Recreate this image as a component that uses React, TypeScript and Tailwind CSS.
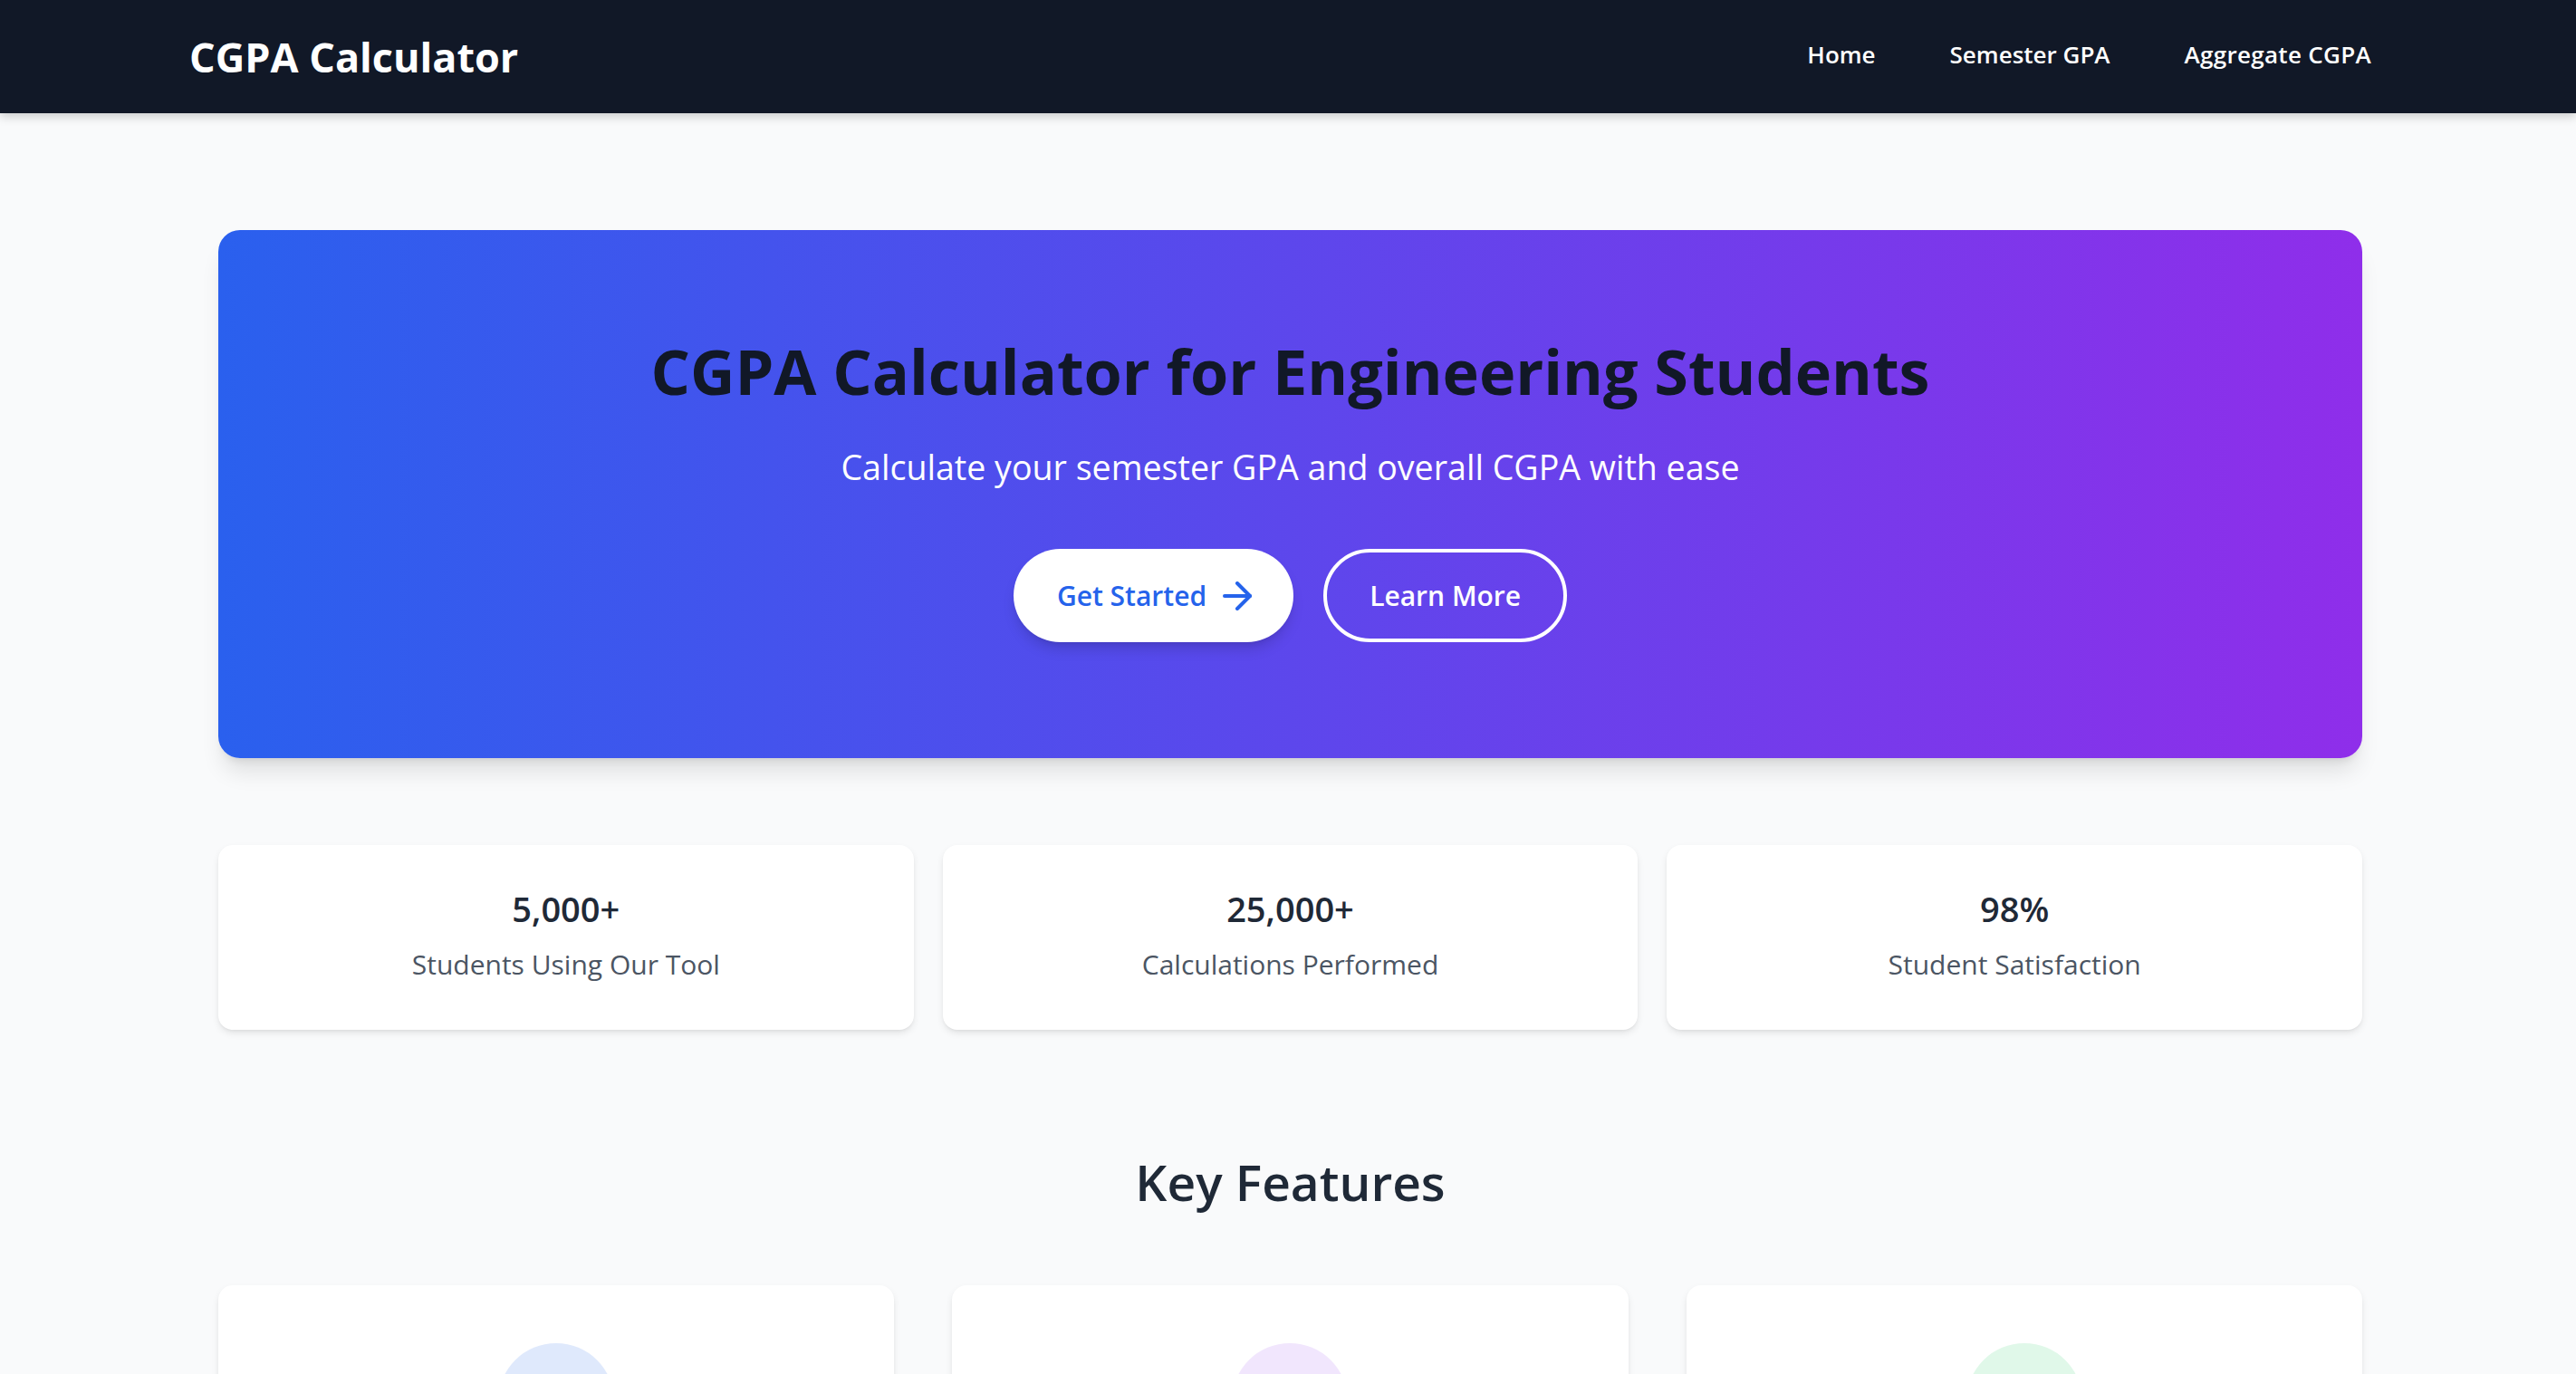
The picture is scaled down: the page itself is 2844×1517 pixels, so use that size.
import React from "react";

function Arrow() {
  return (
    <svg width="32" height="32" viewBox="4 4 16 16" fill="none" stroke="currentColor" strokeWidth="2" strokeLinecap="round" strokeLinejoin="round">
      <path d="M5 12h14" />
      <path d="M12 5l7 7-7 7" />
    </svg>
  );
}

function CalcIcon() {
  return (
    <svg width="56" height="56" viewBox="0 0 24 24" fill="none" stroke="currentColor" strokeWidth="2" strokeLinecap="round" strokeLinejoin="round">
      <rect x="4" y="2" width="16" height="20" rx="2" />
      <path d="M8 6h8M8 11h.01M12 11h.01M16 11h.01M8 15h.01M12 15h.01M16 15h.01M8 19h.01M12 19h.01M16 19h.01" />
    </svg>
  );
}

function ChartIcon() {
  return (
    <svg width="56" height="56" viewBox="0 0 24 24" fill="none" stroke="currentColor" strokeWidth="2" strokeLinecap="round" strokeLinejoin="round">
      <path d="M3 3v18h18" />
      <path d="M7 16l4-5 4 3 5-7" />
    </svg>
  );
}

function CheckIcon() {
  return (
    <svg width="56" height="56" viewBox="0 0 24 24" fill="none" stroke="currentColor" strokeWidth="2" strokeLinecap="round" strokeLinejoin="round">
      <circle cx="12" cy="12" r="9" />
      <path d="M8 12l3 3 5-6" />
    </svg>
  );
}

const stats = [
  { value: "5,000+", label: "Students Using Our Tool" },
  { value: "25,000+", label: "Calculations Performed" },
  { value: "98%", label: "Student Satisfaction" },
];

const cardShadow = "shadow-[0_4px_8px_-1px_rgba(0,0,0,0.1),0_2px_4px_-2px_rgba(0,0,0,0.08)]";

export default function App() {
  return (
    <div className="min-h-screen bg-[#f9fafb] font-['Open_Sans',sans-serif]">
      <nav className="relative z-10 flex h-[125px] items-center justify-between bg-[#111827] pl-[209px] pr-[226px] shadow-[0_4px_10px_rgba(0,0,0,0.18)]">
        <div className="text-[45px] leading-[56px] font-bold text-white">CGPA Calculator</div>
        <div className="mb-[6px] flex items-center gap-[82px]">
          <a className="text-[26px] leading-[36px] font-semibold text-white">Home</a>
          <a className="text-[26px] leading-[36px] font-semibold text-white">Semester GPA</a>
          <a className="text-[26px] leading-[36px] font-semibold tracking-[0.3px] text-white">Aggregate CGPA</a>
        </div>
      </nav>

      <main className="ml-[241px] w-[2367px] pt-[129px] pb-[200px]">
        <section className="flex flex-col items-center rounded-[24px] bg-[linear-gradient(to_right,#2a60ee,#8f2eea)] pt-[116px] pb-[128px] text-center shadow-[0_20px_25px_-5px_rgba(0,0,0,0.1),0_8px_10px_-6px_rgba(0,0,0,0.1)]">
          <h1 className="text-[68.3px] leading-[80px] font-bold text-[#111827]">
            CGPA Calculator for Engineering Students
          </h1>
          <p className="mt-[41px] text-[37.6px] leading-[50px] text-white">
            Calculate your semester GPA and overall CGPA with ease
          </p>
          <div className="mt-[65px] flex items-center gap-[33px]">
            <button className="flex items-center gap-[18px] rounded-full bg-white py-[31.5px] pl-[48px] pr-[46px] text-[30px] leading-[40px] font-semibold text-[#2563eb] shadow-[0_10px_15px_-3px_rgba(0,0,0,0.15),0_4px_6px_-4px_rgba(0,0,0,0.1)]">
              <span>Get Started</span>
              <Arrow />
            </button>
            <button className="rounded-full border-[4px] border-white px-[47px] py-[27.5px] text-[30px] leading-[40px] font-semibold text-white">
              Learn More
            </button>
          </div>
        </section>

        <section className="mt-[96px] grid grid-cols-3 gap-[32px]">
          {stats.map((s) => (
            <div key={s.label} className={`rounded-[16px] bg-white pt-[46px] pb-[52px] text-center ${cardShadow}`}>
              <div className="text-[38px] leading-[48px] font-semibold text-[#1f2937]">{s.value}</div>
              <div className="mt-[18px] text-[30px] leading-[40px] text-[#4b5563]">{s.label}</div>
            </div>
          ))}
        </section>

        <h2 className="mt-[132px] text-center text-[55px] leading-[72px] font-semibold text-[#1f2937]">
          Key Features
        </h2>

        <section className="mt-[78px] grid grid-cols-3 gap-[64px]">
          <div className={`flex flex-col items-center rounded-[16px] bg-white p-[64px] text-center ${cardShadow}`}>
            <div className="flex h-[128px] w-[128px] items-center justify-center rounded-full bg-[#dfe9fc] text-[#2563eb]">
              <CalcIcon />
            </div>
            <h3 className="mt-[40px] text-[40px] leading-[56px] font-semibold text-[#1f2937]">Semester GPA</h3>
            <p className="mt-[16px] text-[30px] leading-[44px] text-[#4b5563]">
              Calculate your GPA for each semester using credits and grade points.
            </p>
          </div>
          <div className={`flex flex-col items-center rounded-[16px] bg-white p-[64px] text-center ${cardShadow}`}>
            <div className="flex h-[128px] w-[128px] items-center justify-center rounded-full bg-[#f1e6fd] text-[#9333ea]">
              <ChartIcon />
            </div>
            <h3 className="mt-[40px] text-[40px] leading-[56px] font-semibold text-[#1f2937]">Aggregate CGPA</h3>
            <p className="mt-[16px] text-[30px] leading-[44px] text-[#4b5563]">
              Combine all your semesters to find your overall cumulative GPA.
            </p>
          </div>
          <div className={`flex flex-col items-center rounded-[16px] bg-white p-[64px] text-center ${cardShadow}`}>
            <div className="flex h-[128px] w-[128px] items-center justify-center rounded-full bg-[#e0f8e9] text-[#16a34a]">
              <CheckIcon />
            </div>
            <h3 className="mt-[40px] text-[40px] leading-[56px] font-semibold text-[#1f2937]">Accurate Results</h3>
            <p className="mt-[16px] text-[30px] leading-[44px] text-[#4b5563]">
              Get precise results based on your university grading system.
            </p>
          </div>
        </section>
      </main>
    </div>
  );
}
